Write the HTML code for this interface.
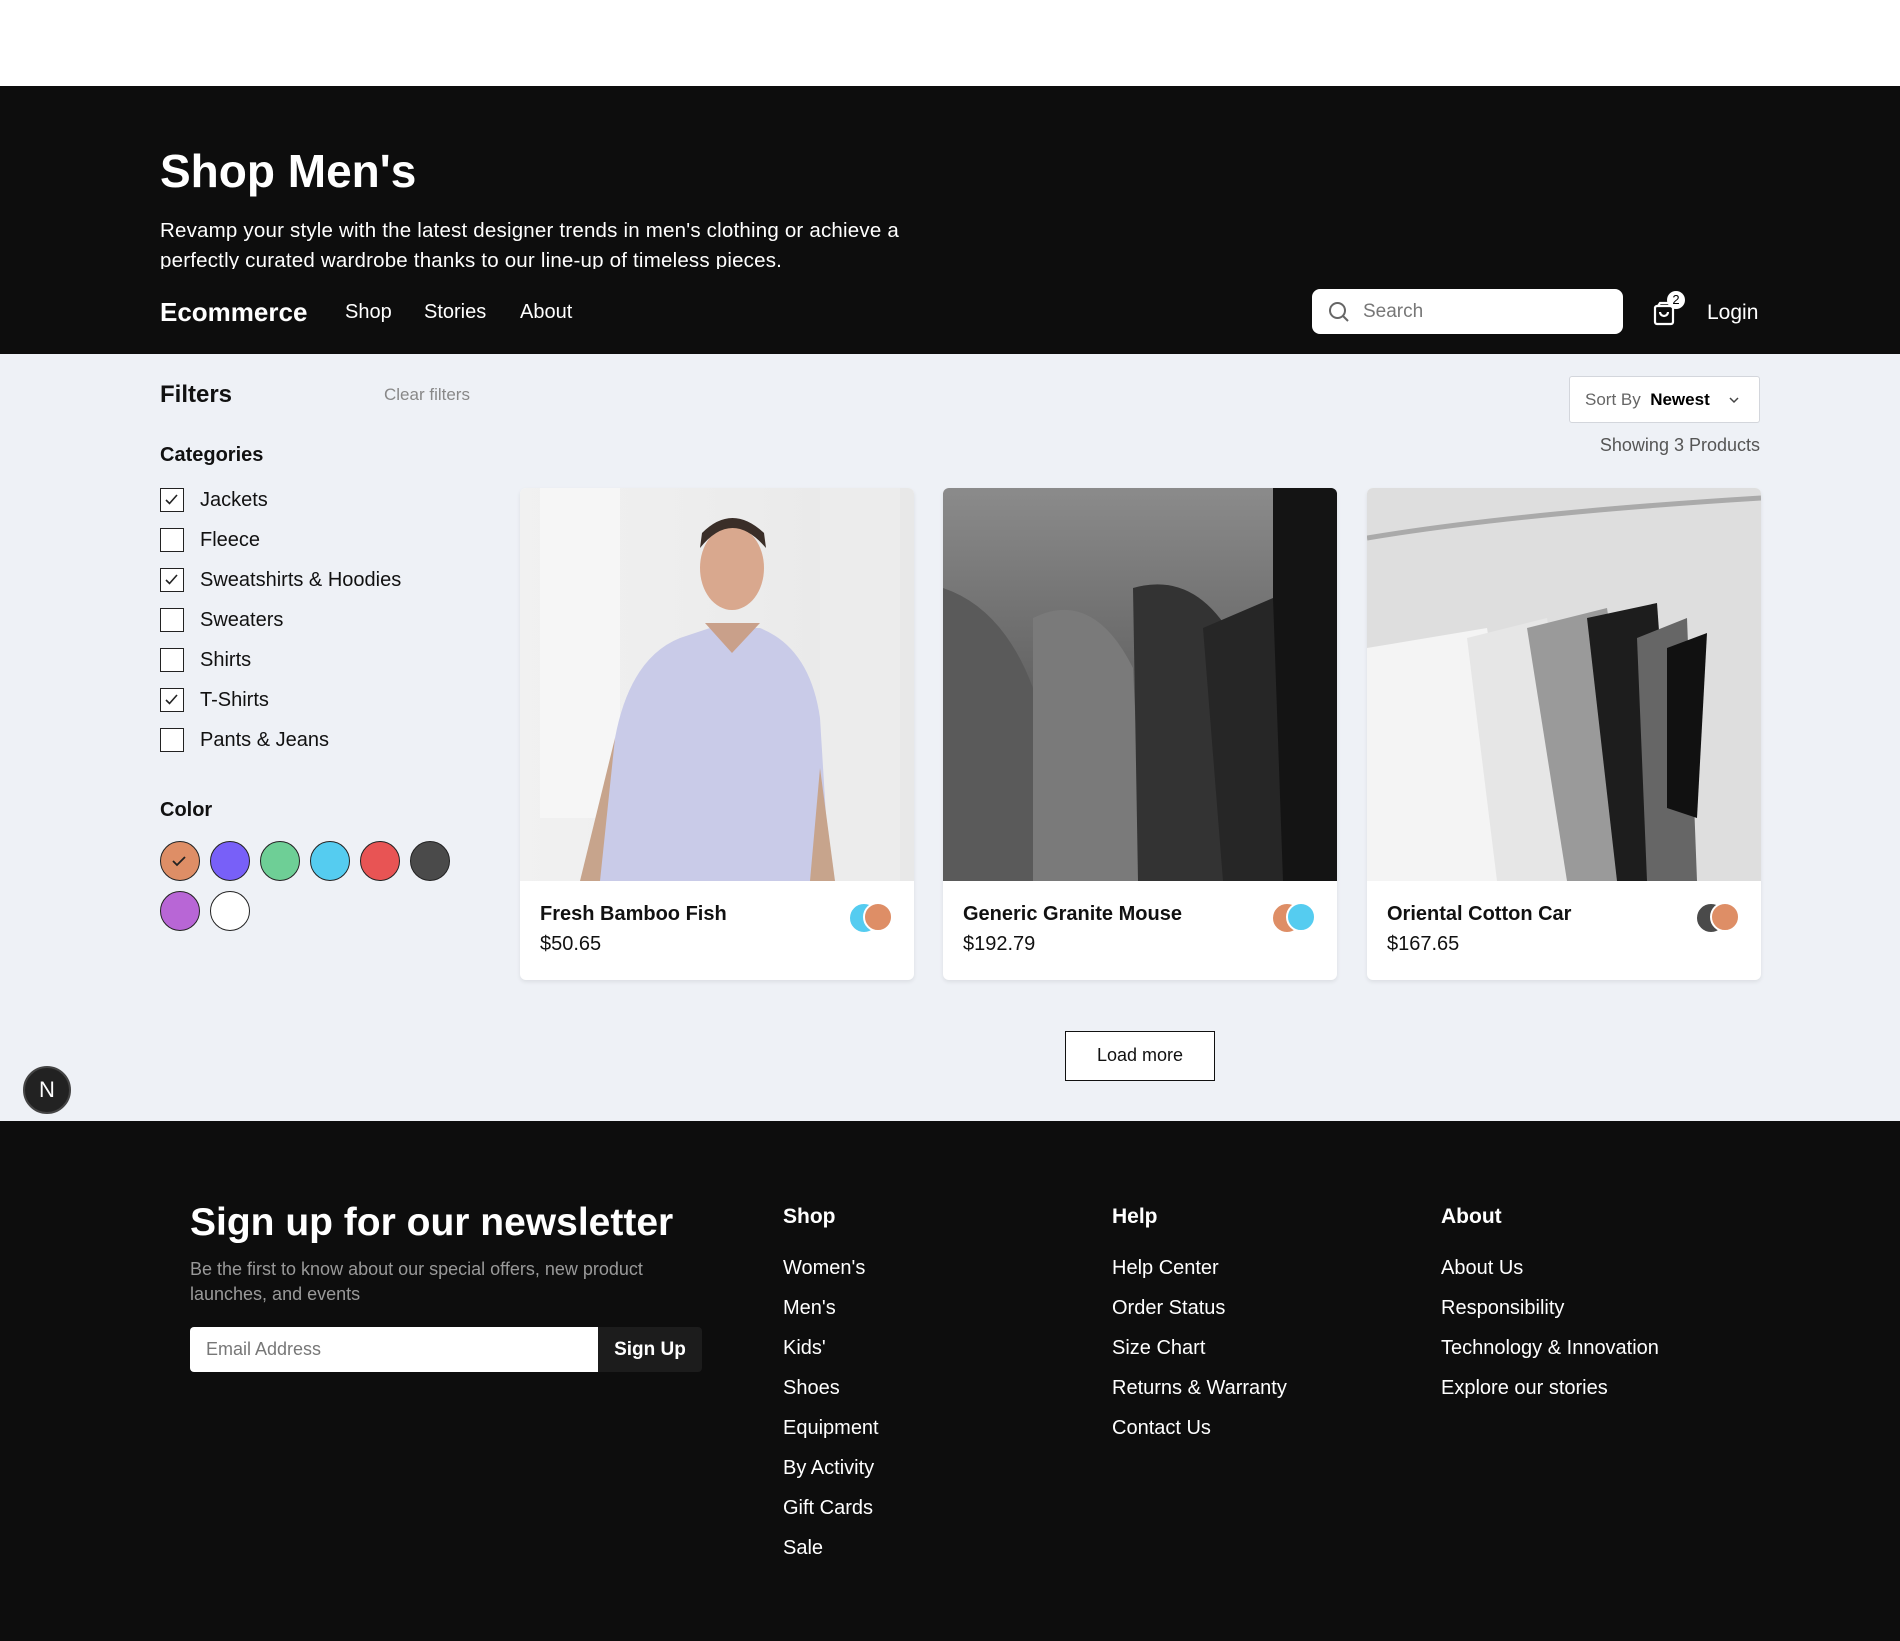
<!DOCTYPE html>
<html><head><meta charset="utf-8"><style>
*{box-sizing:border-box;margin:0;padding:0}
body{width:1900px;height:1641px;position:relative;background:#fff;font-family:"Liberation Sans",sans-serif;color:#111;overflow:hidden}
.a{position:absolute;white-space:nowrap}
.hdr{left:0;top:86px;width:1900px;height:268px;background:#0d0d0d;color:#fff}
.main{left:0;top:354px;width:1900px;height:767px;background:#eef1f6}
.foot{left:0;top:1121px;width:1900px;height:520px;background:#0d0d0d;color:#fff}
.cb{width:24px;height:24px;border:1.5px solid #222;background:#fff}
.cl{font-size:20px;color:#111}
.sw{width:40px;height:40px;border-radius:50%;border:1.5px solid #222}
.card{background:#fff;border-radius:6px;overflow:hidden;width:394px;height:492px;top:488px;box-shadow:0 2px 4px rgba(0,0,0,.08)}
.card .img{width:394px;height:393px;overflow:hidden}
.nm{left:20px;top:415px;font-size:20px;font-weight:bold}
.pr{left:20px;top:445px;font-size:20px}
.dot{width:28px;height:28px;border-radius:50%;border:2px solid #fff}
.fh{font-size:21px;font-weight:bold}
.fl{font-size:20px}
</style></head><body>
<div class="a hdr">
 <div class="a" style="left:160px;top:58px;font-size:46px;font-weight:bold">Shop Men's</div>
 <div class="a" style="left:160px;top:130px;width:800px;white-space:normal;font-size:20.5px;letter-spacing:0.2px;line-height:30px;height:53px;overflow:hidden">Revamp your style with the latest designer trends in men's clothing or achieve a perfectly curated wardrobe thanks to our line-up of timeless pieces.</div>
 <div class="a" style="left:160px;top:211px;font-size:26px;font-weight:bold">Ecommerce</div>
 <div class="a" style="left:345px;top:215px;font-size:20px">Shop</div>
 <div class="a" style="left:424px;top:215px;font-size:20px">Stories</div>
 <div class="a" style="left:520px;top:215px;font-size:20px">About</div>
 <div class="a" style="left:1312px;top:203px;width:311px;height:45px;background:#fff;border-radius:8px">
  <svg class="a" style="left:15px;top:11px" width="24" height="24" viewBox="0 0 24 24" fill="none" stroke="#666" stroke-width="2"><circle cx="10.5" cy="10.5" r="7.5"/><path d="M16 16l5 5"/></svg>
  <div class="a" style="left:51px;top:12px;font-size:19px;color:#777">Search</div>
 </div>
 <svg class="a" style="left:1652px;top:213px" width="26" height="28" viewBox="0 0 26 28" fill="none" stroke="#fff" stroke-width="2.2"><rect x="3" y="7" width="18" height="18" rx="2"/><path d="M8 13a4 4 0 0 0 8 0"/><path d="M6 7l2-3h8"/></svg>
 <div class="a" style="left:1667px;top:205px;width:18px;height:18px;border-radius:50%;background:#fff;color:#000;font-size:13px;text-align:center;line-height:18px">2</div>
 <div class="a" style="left:1707px;top:215px;font-size:21px">Login</div>
</div>
<div class="a main">
 <div class="a" style="left:160px;top:27px;font-size:24px;font-weight:bold">Filters</div>
 <div class="a" style="left:384px;top:31px;font-size:17px;color:#888">Clear filters</div>
 <div class="a" style="left:160px;top:90px;font-size:20px;font-weight:bold">Categories</div>
 <div class="a" style="left:1569px;top:22px;width:191px;height:47px;background:#fff;border:1px solid #d3d6dc;border-radius:3px;font-size:17px;line-height:45px;padding-left:15px"><span style="color:#666">Sort By</span>&nbsp; <b style="color:#000">Newest</b>
  <svg class="a" style="left:158px;top:18px" width="12" height="10" viewBox="0 0 12 10" fill="none" stroke="#444" stroke-width="1.5"><path d="M2 3l4 4 4-4"/></svg></div>
 <div class="a" style="right:140px;top:81px;font-size:18px;color:#555">Showing 3 Products</div>

  <div class="a cb" style="left:160px;top:134px"><svg width="21" height="21" viewBox="0 0 21 21" fill="none" stroke="#222" stroke-width="1.6"><path d="M5 11l3.5 3.5L16 6"/></svg></div><div class="a cl" style="left:200px;top:135px">Jackets</div>
  <div class="a cb" style="left:160px;top:174px"></div><div class="a cl" style="left:200px;top:175px">Fleece</div>
  <div class="a cb" style="left:160px;top:214px"><svg width="21" height="21" viewBox="0 0 21 21" fill="none" stroke="#222" stroke-width="1.6"><path d="M5 11l3.5 3.5L16 6"/></svg></div><div class="a cl" style="left:200px;top:215px">Sweatshirts &amp; Hoodies</div>
  <div class="a cb" style="left:160px;top:254px"></div><div class="a cl" style="left:200px;top:255px">Sweaters</div>
  <div class="a cb" style="left:160px;top:294px"></div><div class="a cl" style="left:200px;top:295px">Shirts</div>
  <div class="a cb" style="left:160px;top:334px"><svg width="21" height="21" viewBox="0 0 21 21" fill="none" stroke="#222" stroke-width="1.6"><path d="M5 11l3.5 3.5L16 6"/></svg></div><div class="a cl" style="left:200px;top:335px">T-Shirts</div>
  <div class="a cb" style="left:160px;top:374px"></div><div class="a cl" style="left:200px;top:375px">Pants &amp; Jeans</div>

 <div class="a" style="left:160px;top:445px;font-size:20px;font-weight:bold">Color</div>
 <div class="a sw" style="left:160px;top:487px;background:#de8e66"><svg width="37" height="37" viewBox="0 0 37 37" fill="none" stroke="#222" stroke-width="1.8"><path d="M12 19l4 4 8-8"/></svg></div>
 <div class="a sw" style="left:210px;top:487px;background:#7860f8"></div>
 <div class="a sw" style="left:260px;top:487px;background:#6ecf96"></div>
 <div class="a sw" style="left:310px;top:487px;background:#55ccf0"></div>
 <div class="a sw" style="left:360px;top:487px;background:#e85454"></div>
 <div class="a sw" style="left:410px;top:487px;background:#4a4a4a"></div>
 <div class="a sw" style="left:160px;top:537px;background:#b866d6"></div>
 <div class="a sw" style="left:210px;top:537px;background:#fff"></div>

 <div class="a card" style="left:520px;top:134px">
  <div class="img"><svg width="394" height="393" viewBox="0 0 394 393"><defs><linearGradient id="g1" x1="0" x2="1"><stop offset="0" stop-color="#f1f1f1"/><stop offset="1" stop-color="#e8e8e8"/></linearGradient></defs><rect width="394" height="393" fill="url(#g1)"/><rect x="20" y="0" width="80" height="330" fill="#f6f6f6"/><rect x="300" y="0" width="80" height="393" fill="#ececec"/><path d="M70 393 L95 250 Q110 170 160 150 L190 140 L240 140 Q290 160 300 230 L310 393Z" fill="#c9cbe8"/><path d="M60 393L95 250 L80 393Z" fill="#c7a48c"/><path d="M300 280 L315 393 L290 393Z" fill="#c7a48c"/><ellipse cx="212" cy="80" rx="32" ry="42" fill="#d9a88e"/><path d="M180 60 Q212 20 246 60 L244 45 Q212 15 182 45Z" fill="#3a2e28"/><path d="M185 135 L240 135 L212 165Z" fill="#c9a08a"/></svg></div>
  <div class="a nm">Fresh Bamboo Fish</div><div class="a pr">$50.65</div>
  <div class="a dot" style="left:330px;top:416px;background:#55ccf0;border-color:#55ccf0"></div><div class="a dot" style="left:343px;top:414px;width:30px;height:30px;background:#de8e66"></div>
 </div>
 <div class="a card" style="left:943px;top:134px">
  <div class="img"><svg width="394" height="393" viewBox="0 0 394 393"><defs><linearGradient id="g2" x1="0" y1="0" x2="0" y2="1"><stop offset="0" stop-color="#8b8b8b"/><stop offset="1" stop-color="#3d3d3d"/></linearGradient></defs><rect width="394" height="393" fill="url(#g2)"/><rect x="330" y="0" width="64" height="393" fill="#141414"/><path d="M0 100 Q60 120 90 200 L100 393 L0 393Z" fill="#5a5a5a"/><path d="M90 130 Q150 100 190 180 L200 393 L90 393Z" fill="#7a7a7a"/><path d="M190 100 Q260 80 300 170 L300 393 L195 393Z" fill="#333"/><path d="M260 140 L330 110 L340 393 L280 393Z" fill="#262626"/></svg></div>
  <div class="a nm">Generic Granite Mouse</div><div class="a pr">$192.79</div>
  <div class="a dot" style="left:330px;top:416px;background:#de8e66;border-color:#de8e66"></div><div class="a dot" style="left:343px;top:414px;width:30px;height:30px;background:#55ccf0"></div>
 </div>
 <div class="a card" style="left:1367px;top:134px">
  <div class="img"><svg width="394" height="393" viewBox="0 0 394 393"><rect width="394" height="393" fill="#dedede"/><path d="M0 50 Q150 25 394 10" stroke="#aaa" stroke-width="5" fill="none"/><path d="M0 160 L120 140 L160 393 L0 393Z" fill="#f4f4f4"/><path d="M100 150 L180 130 L220 393 L130 393Z" fill="#e6e6e6"/><path d="M160 140 L240 120 L280 393 L200 393Z" fill="#9a9a9a"/><path d="M220 130 L290 115 L310 393 L250 393Z" fill="#1d1d1d"/><path d="M270 150 L320 130 L330 393 L280 393Z" fill="#666"/><path d="M300 160 L340 145 L330 330 L300 320Z" fill="#111"/></svg></div>
  <div class="a nm">Oriental Cotton Car</div><div class="a pr">$167.65</div>
  <div class="a dot" style="left:330px;top:416px;background:#4a4a4a;border-color:#4a4a4a"></div><div class="a dot" style="left:343px;top:414px;width:30px;height:30px;background:#de8e66"></div>
 </div>
 <div class="a" style="left:1065px;top:677px;width:150px;height:50px;border:1.5px solid #111;background:#fff;font-size:18px;text-align:center;line-height:47px">Load more</div>
</div>
<div class="a" style="left:23px;top:1066px;width:48px;height:48px;border-radius:50%;background:#222;border:2px solid #444;color:#fff;font-size:22px;text-align:center;line-height:44px">N</div>
<div class="a foot">
 <div class="a" style="left:190px;top:80px;font-size:39px;font-weight:bold">Sign up for our newsletter</div>
 <div class="a" style="left:190px;top:136px;width:500px;white-space:normal;font-size:18px;line-height:25px;color:#999">Be the first to know about our special offers, new product launches, and events</div>
 <div class="a" style="left:190px;top:206px;width:408px;height:45px;background:#fff;border-radius:4px 0 0 4px;color:#777;font-size:18px;line-height:45px;padding-left:16px">Email Address</div>
 <div class="a" style="left:598px;top:206px;width:104px;height:45px;background:#1c1c1c;border-radius:0 4px 4px 0;font-size:19px;font-weight:bold;text-align:center;line-height:45px">Sign Up</div>
 <div class="a fh" style="left:783px;top:84px">Shop</div>
 <div class="a" style="left:783px;top:127px;line-height:40px"><div class="fl">Women's</div><div class="fl">Men's</div><div class="fl">Kids'</div><div class="fl">Shoes</div><div class="fl">Equipment</div><div class="fl">By Activity</div><div class="fl">Gift Cards</div><div class="fl">Sale</div></div>
 <div class="a fh" style="left:1112px;top:84px">Help</div>
 <div class="a" style="left:1112px;top:127px;line-height:40px"><div class="fl">Help Center</div><div class="fl">Order Status</div><div class="fl">Size Chart</div><div class="fl">Returns &amp; Warranty</div><div class="fl">Contact Us</div></div>
 <div class="a fh" style="left:1441px;top:84px">About</div>
 <div class="a" style="left:1441px;top:127px;line-height:40px"><div class="fl">About Us</div><div class="fl">Responsibility</div><div class="fl">Technology &amp; Innovation</div><div class="fl">Explore our stories</div></div>
</div>
</body></html>
